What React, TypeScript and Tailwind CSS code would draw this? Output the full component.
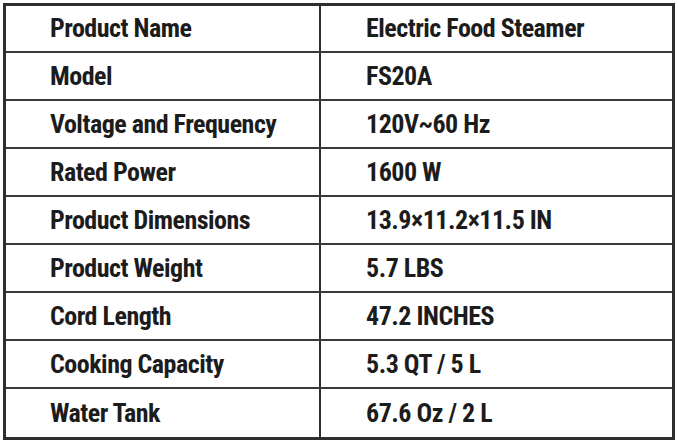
const SPECS = [
  ['Product Name', 'Electric Food Steamer'],
  ['Model', 'FS20A'],
  ['Voltage and Frequency', '120V~60 Hz'],
  ['Rated Power', '1600 W'],
  ['Product Dimensions', '13.9×11.2×11.5 IN'],
  ['Product Weight', '5.7 LBS'],
  ['Cord Length', '47.2 INCHES'],
  ['Cooking Capacity', '5.3 QT / 5 L'],
  ['Water Tank', '67.6 Oz / 2 L'],
];

export default function App() {
  return (
    <div className="w-[678px] h-[445px] bg-white pt-[3px] pl-[3px]">
      <div className="w-[672px] h-[437px] border-[3px] border-[#2e2e2e] flex flex-col font-['Roboto',sans-serif] font-stretch-condensed font-bold text-[26px] tracking-[-0.5px] text-[#1c1c1c]">
        {SPECS.map(([label, value], i) => (
          <div
            key={label}
            className={
              i === 0
                ? 'grid grid-cols-[315px_1fr] h-[45px]'
                : i === SPECS.length - 1
                  ? 'grid grid-cols-[315px_1fr] flex-1 border-t-2 border-[#3a3a3a]'
                  : 'grid grid-cols-[315px_1fr] h-[48px] border-t-2 border-[#3a3a3a]'
            }
          >
            <div className="flex items-center pl-[44px] border-r-2 border-[#2e2e2e]">
              {label}
            </div>
            <div className="flex items-center pl-[45px]">{value}</div>
          </div>
        ))}
      </div>
    </div>
  );
}
